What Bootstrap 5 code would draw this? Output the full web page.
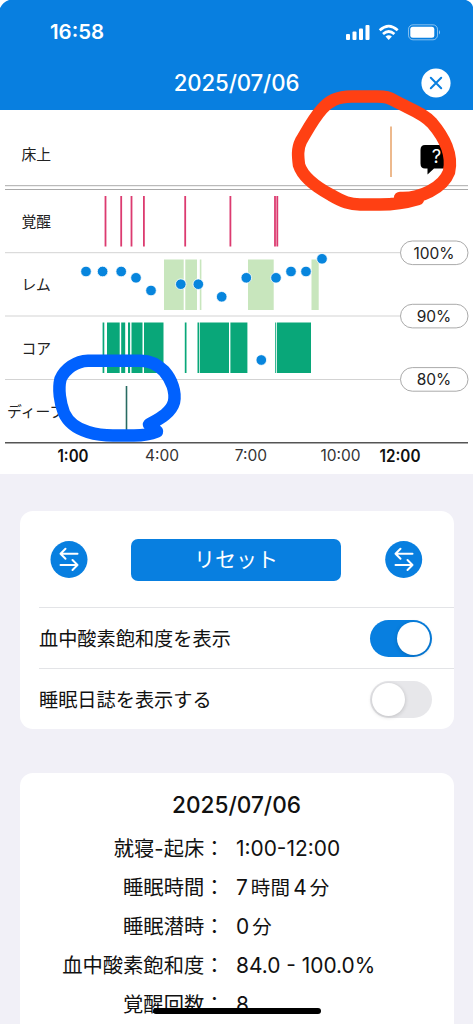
<!DOCTYPE html>
<html lang="ja">
<head>
<meta charset="utf-8">
<meta name="viewport" content="width=device-width, initial-scale=1">
<title>2025/07/06</title>
<link href="https://cdn.jsdelivr.net/npm/bootstrap@5.3.0/dist/css/bootstrap.min.css" rel="stylesheet">
<style>
:root { --brand: #087fe0; }
body { font-family: Inter, "Noto Sans CJK JP", sans-serif; background: #f1f0f7; color: #111; }
.screen { width: 473px; height: 1024px; }
.app-head { height: 110.4px; background: var(--brand); }
.status-row { height: 56px; padding: 7px 32px 0 50px; }
.clock { font-size: 20.4px; font-weight: 600; line-height: 24px; letter-spacing: 0; }
.title-row { height: 54px; display: grid; grid-template-columns: 1fr auto 1fr; padding: 0 22px; }
.day-title { font-size: 22.2px; font-weight: 500; line-height: 28px; letter-spacing: -.1px; }
.chart-box { height: 363.6px; }
.chart-box svg { display: block; margin-top: -.4px; }
.panel { width: 434px; margin-left: 19.5px; border-radius: 13px; background: #fff; }
.panel-controls { margin-top: 37px; height: 218px; }
.tool-row { height: 96px; padding: 2px 30.5px 0; }
.btn-reset { width: 210px; height: 42px; margin-right: 1px; background: var(--brand); color: #fff; border-radius: 7px; font-size: 21px; line-height: 28px; padding: 0; }
.switch-row { height: 61px; margin-left: 19.5px; padding-right: 22px; padding-top: 1px; border-top: 1px solid #e3e4e7; font-size: 19.2px; }
.switch-row > span { padding-top: 2px; }
.toggle { width: 62px; height: 37px; background: #e7e7ea; padding: 2px; }
.toggle span { width: 33px; height: 33px; background: #fff; box-shadow: 0 1px 4px rgba(0,0,0,.18); }
.toggle.on { background: var(--brand); }
.panel-detail { margin-top: 44px; height: 251px; border-radius: 13px 13px 0 0; padding-top: 17px; }
.detail-title { font-size: 22.6px; font-weight: 500; line-height: 30px; letter-spacing: 0; margin-bottom: 10.6px; }
.detail-row { height: 38.9px; line-height: 38.9px; display: grid; grid-template-columns: 205px 1fr; column-gap: 11.5px; font-size: 20.3px; white-space: nowrap; }
.detail-row .val { font-size: 20.9px; letter-spacing: 0; }
.val .unit { font-size: 19.5px; letter-spacing: .2px; margin: 0 3px; }
.ink { position: absolute; left: 0; top: 0; pointer-events: none; }
.home-bar { position: absolute; left: 153px; top: 1008px; width: 168px; height: 6px; border-radius: 3px; background: #000; }
</style>
</head>
<body>
<div class="screen position-relative overflow-hidden">
  <header class="app-head text-white">
    <div class="status-row d-flex align-items-center justify-content-between">
      <span class="clock">16:58</span>
      <svg width="96" height="18" viewBox="0 0 96 18" fill="#fff">
        <rect x="1" y="11" width="4" height="6" rx="1"/><rect x="7.5" y="8.5" width="4" height="8.5" rx="1"/><rect x="14" y="5.5" width="4" height="11.5" rx="1"/><rect x="20.5" y="2" width="4" height="15" rx="1"/>
        <g fill="none" stroke="#fff" stroke-width="2.7"><path d="M34.7 7.3Q43.7-.9 52.7 7.3"/><path d="M38 11Q43.7 6 49.4 11"/></g>
        <path d="M40.5 13.5Q43.7 10.9 46.9 13.5L43.7 17Z"/>
        <rect x="63.5" y="1.8" width="29" height="15" rx="4.5" fill="none" stroke="#fff" stroke-opacity=".5"/><rect x="65.3" y="3.8" width="24" height="11" rx="2.5"/><path d="M94 7q2 2.3 0 4.6z" opacity=".6"/>
      </svg>
    </div>
    <div class="title-row align-items-center">
      <span></span>
      <span class="day-title">2025/07/06</span>
      <svg class="ms-auto" width="30" height="30" viewBox="0 0 30 30"><circle cx="15" cy="15" r="14.6" fill="#fff"/><path d="M9.8 9.8l10.4 10.4M20.2 9.8L9.8 20.2" stroke="#087fe0" stroke-width="2" stroke-linecap="round"/></svg>
    </div>
  </header>

  <section class="chart-box bg-white">
    <svg width="473" height="364" viewBox="0 110 473 364">
      <g fill="none">
        <path d="M5 185.7H468M5 189.5H468" stroke="#aaa"/>
        <path d="M5 252.7H468M5 316H468M5 379.5H468" stroke="#d3d3d3"/>
        <path d="M5 442.7H468" stroke="#555" stroke-width="1.4"/>
        <path d="M105.5 196V246.5M121.2 196V246.5M131.5 196V246.5M143.9 196V246.5M185.2 196V246.5M230.4 196V246.5M275 196V246.5M277.3 196V246.5" stroke="#dc3b70" stroke-width="1.8"/>
        <path d="M391 126.5V177" stroke="#edb98d" stroke-width="2"/>
        <path d="M126.5 386V436" stroke="#286b62" stroke-width="1.6"/>
      </g>
      <path fill="#c8e6bd" d="M164 259.5h19.7V310H164zM185.3 259.5H197V310H185.3zM199.8 259.5h1.6V310h-1.6zM248 259.5h25.7V310H248zM311.5 259.5h7.2V310h-7.2z"/>
      <path fill="#09a779" d="M102.6 322.5h1.7V373h-1.7zM107 322.5h12.7V373H107zM121.2 322.5h4V373h-4zM128 322.5h2.1V373H128zM131.5 322.5h11V373h-11zM144 322.5h19.5V373H144zM184.8 322.5h1.7V373h-1.7zM197.5 322.5h1.6V373h-1.6zM199.8 322.5H229V373H199.8zM230.4 322.5h17V373h-17zM275.2 322.5h1V373h-1zM277 322.5h34V373h-34z"/>
      <g fill="#0785dd" stroke="#fff" stroke-width=".8">
        <circle cx="86" cy="271.5" r="5.3"/><circle cx="102.6" cy="271.5" r="5.3"/><circle cx="121.2" cy="271.5" r="5.3"/><circle cx="136" cy="277.8" r="5.3"/><circle cx="151" cy="290.5" r="5.3"/><circle cx="180.8" cy="284.2" r="5.3"/><circle cx="198.3" cy="284.2" r="5.3"/><circle cx="221.7" cy="296.8" r="5.3"/><circle cx="246.3" cy="277.8" r="5.3"/><circle cx="276" cy="277.8" r="5.3"/><circle cx="291" cy="271.5" r="5.3"/><circle cx="306" cy="271.5" r="5.3"/><circle cx="322" cy="258.8" r="5.3"/><circle cx="261.3" cy="360" r="5.3"/>
      </g>
      <g fill="#fff" stroke="#aaa"><rect x="400.5" y="241" width="67.5" height="23.6" rx="11.8"/><rect x="400.5" y="304.3" width="67.5" height="23.6" rx="11.8"/><rect x="400.5" y="367.6" width="67.5" height="23.6" rx="11.8"/></g>
      <g font-size="15.5" text-anchor="middle" fill="#222"><text x="434" y="258.6">100%</text><text x="434" y="321.9">90%</text><text x="434" y="385.2">80%</text></g>
      <g font-size="14.8" fill="#222"><text x="21.5" y="160">床上</text><text x="21.5" y="226.7">覚醒</text><text x="21.5" y="290.3">レム</text><text x="21.5" y="353.5">コア</text><text x="7" y="416.8">ディープ</text></g>
      <g font-size="15.5" text-anchor="middle" fill="#333"><text x="162" y="460.8">4:00</text><text x="251" y="460.8">7:00</text><text x="340.5" y="460.8">10:00</text></g>
      <g font-size="16.8" font-weight="600" text-anchor="middle" fill="#111"><text x="73" y="462" textLength="31" lengthAdjust="spacingAndGlyphs">1:00</text><text x="400" y="462" textLength="41" lengthAdjust="spacingAndGlyphs">12:00</text></g>
      <path d="M425 145h22q5 0 5 5v13.5q0 5-5 5h-13l-6.5 6v-6h-2.5q-4.5 0-4.5-5V150q0-5 4.5-5z"/>
      <text x="436.5" y="163" font-size="18.5" fill="#fff" text-anchor="middle">?</text>
    </svg>
  </section>

  <section class="panel panel-controls">
    <div class="tool-row d-flex align-items-center justify-content-between">
      <button class="btn border-0 p-0 d-flex" aria-label="切替"><svg width="38" height="38" viewBox="0 0 38 38" fill="none" stroke="#fff" stroke-width="2" stroke-linecap="round" stroke-linejoin="round"><circle cx="19" cy="18.5" r="18.5" fill="#087fe0" stroke="none"/><path d="M27.5 12.8H10.5M15.5 7.8L10.5 12.8L15.5 17.8M10.5 24H27.5M22.5 19L27.5 24L22.5 29"/></svg></button>
      <button class="btn btn-reset">リセット</button>
      <button class="btn border-0 p-0 d-flex" aria-label="切替"><svg width="38" height="38" viewBox="0 0 38 38" fill="none" stroke="#fff" stroke-width="2" stroke-linecap="round" stroke-linejoin="round"><circle cx="18.7" cy="18.5" r="18.5" fill="#087fe0" stroke="none"/><path d="M27.5 12.8H10.5M15.5 7.8L10.5 12.8L15.5 17.8M10.5 24H27.5M22.5 19L27.5 24L22.5 29"/></svg></button>
    </div>
    <div class="switch-row d-flex align-items-center justify-content-between"><span>血中酸素飽和度を表示</span><div class="toggle on rounded-pill d-flex justify-content-end"><span class="rounded-circle"></span></div></div>
    <div class="switch-row d-flex align-items-center justify-content-between"><span>睡眠日誌を表示する</span><div class="toggle rounded-pill d-flex"><span class="rounded-circle"></span></div></div>
  </section>

  <section class="panel panel-detail">
    <div class="detail-title text-center">2025/07/06</div>
    <div class="detail-row"><span class="text-end">就寝-起床：</span><span class="val">1:00-12:00</span></div>
    <div class="detail-row"><span class="text-end">睡眠時間：</span><span class="val">7<span class="unit">時間</span>4<span class="unit">分</span></span></div>
    <div class="detail-row"><span class="text-end">睡眠潜時：</span><span class="val">0<span class="unit">分</span></span></div>
    <div class="detail-row"><span class="text-end">血中酸素飽和度：</span><span class="val">84.0 - 100.0%</span></div>
    <div class="detail-row"><span class="text-end">覚醒回数：</span><span class="val">8</span></div>
  </section>

  <svg class="ink" width="473" height="1024" viewBox="0 0 473 1024" fill="none" stroke-width="12.5" stroke-linecap="round" stroke-linejoin="round">
    <path d="M0 0H9Q3 2 0 8ZM473 0H466Q472 2 473 7Z" fill="#fff"/>
    <path stroke="#ff4013" d="M400 198C420 199 443 188 449 172C453 155 444 137 432 123C423 113 410 109 397 102C389 97 385 96.5 377 96.5H352C337 96.5 329 101 322 109C313 119 307 131 301 141C297 149 298 157 299 165C303 178 318 188 331 195C343 202 350 204.500 360 204.500H380C395 204.500 408 202 418 199"/>
    <path stroke="#0061fe" d="M150 424C159 419 171 413 174 402C176 392 172 380 164 371C157 364 150 360.700 141 360.700H88C76 361 65 369 60.500 379C58 389 60 403 64 413C69 424 78 429 88 432C98 435 105 435.500 113 435.500H134C143 435.500 151 434 157 431.500L149 424.500"/>
  </svg>
  <div class="home-bar"></div>
</div>
<script src="https://cdn.jsdelivr.net/npm/bootstrap@5.3.0/dist/js/bootstrap.bundle.min.js"></script>
</body>
</html>
